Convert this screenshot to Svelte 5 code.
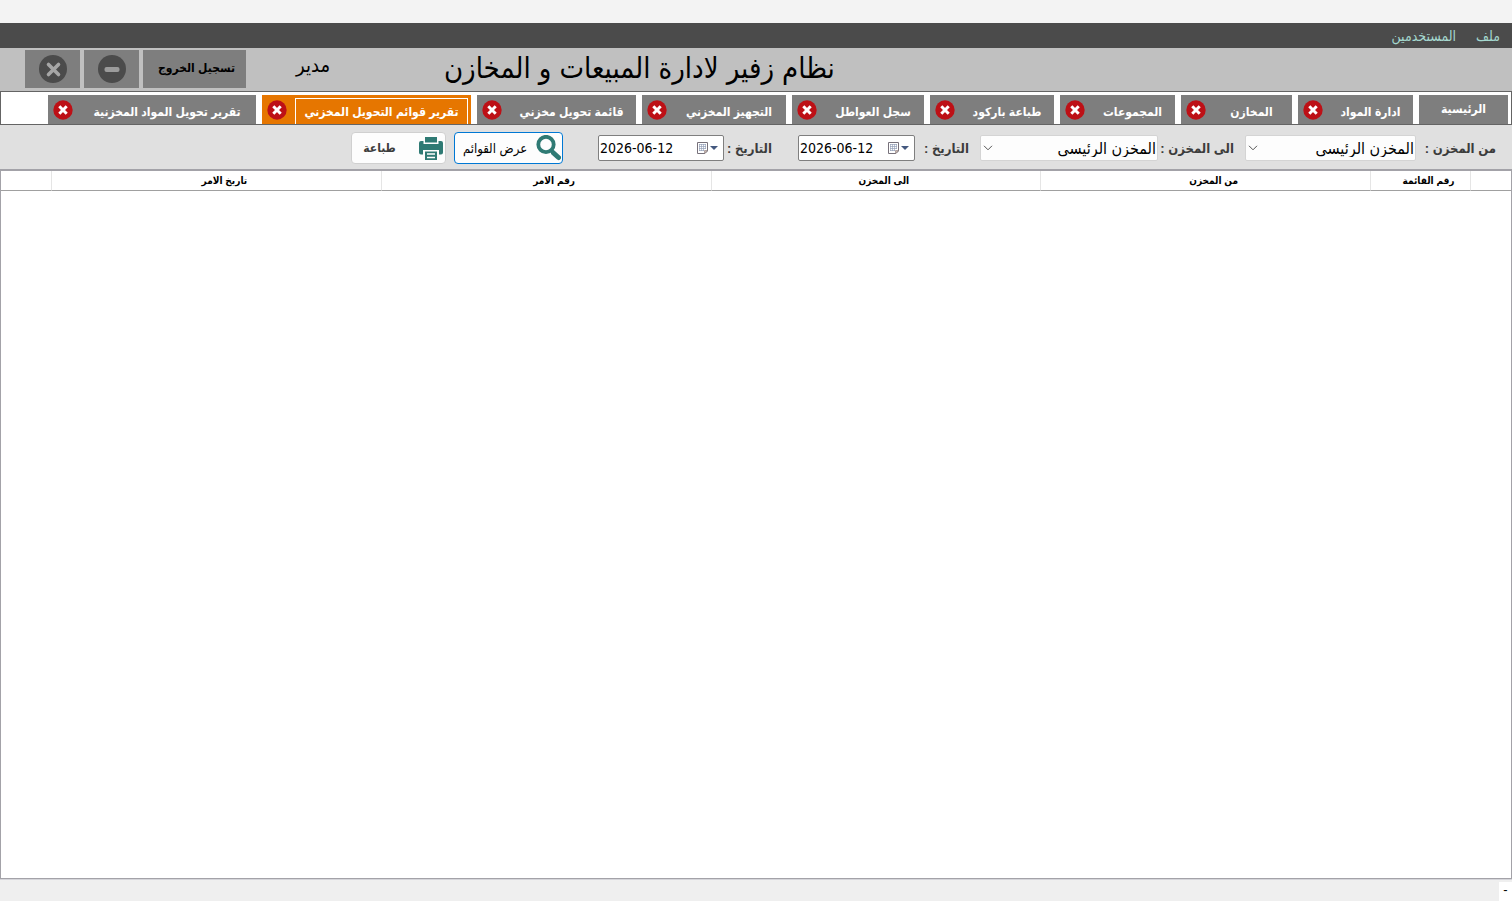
<script>
  const menus = ['ملف', 'المستخدمين'];
  const tabs = [
    { title: 'ادارة المواد', width: 115 },
    { title: 'المخازن', width: 111 },
    { title: 'المجموعات', width: 115 },
    { title: 'طباعة باركود', width: 124 },
    { title: 'سجل العواطل', width: 132 },
    { title: 'التجهيز المخزني', width: 144 },
    { title: 'قائمة تحويل مخزني', width: 159 },
    { title: 'تقرير قوائم التحويل المخزني', width: 209 },
    { title: 'تقرير تحويل المواد المخزنية', width: 208 }
  ];
  let active = $state('تقرير قوائم التحويل المخزني');
  let fromDate = $state('2026-06-12');
  let toDate = $state('2026-06-12');
</script>

{#snippet calendar()}
  <svg width="22" height="14" viewBox="0 0 22 14" aria-hidden="true">
    <path d="M1.500 1.500h10v8.500l-2.500 2.500h-7.500z" fill="#fff" stroke="#77717a" />
    <path d="M3 3h7v1H3zM3 5h7v1H3zM3 7h7v1H3zM3 9h5v1H3z" fill="#b4bdd0" />
    <path d="M3 3h1v7H3zM5 3h1v7H5zM7 3h1v7H7zM9 3h1v5H9z" fill="#8f9bb3" opacity=".6" />
    <path d="M8.500 12.500V9.500h3z" fill="#c9b6b0" stroke="#8d8080" stroke-width=".6" />
    <path d="M14 5h8l-4 4z" fill="#44597f" />
  </svg>
{/snippet}

{#snippet warehouse(id)}
  <div class="combo">
    <select {id}>
      <option>المخزن الرئيسي</option>
    </select>
    <svg width="10" height="6" viewBox="0 0 10 6" aria-hidden="true">
      <path d="M1 .8l4 4 4-4" fill="none" stroke="#555" />
    </svg>
  </div>
{/snippet}

<div class="app" dir="rtl">
  <nav class="menubar">
    {#each menus as menu}
      <button>{menu}</button>
    {/each}
  </nav>

  <header>
    <h1>نظام زفير لادارة المبيعات و المخازن</h1>
    <span class="user">مدير</span>
    <div class="window-actions">
      <button class="logout">تسجيل الخروج</button>
      <button class="round" aria-label="تصغير">
        <svg width="28" height="28" viewBox="0 0 28 28">
          <circle cx="14" cy="14" r="14" fill="#4b4b4b" />
          <rect x="6.500" y="12" width="15" height="5" rx="2" fill="#9b9b9b" />
        </svg>
      </button>
      <button class="round" aria-label="اغلاق">
        <svg width="28" height="28" viewBox="0 0 28 28">
          <circle cx="14" cy="14" r="14" fill="#4b4b4b" />
          <path d="M9.500 9.500l10 10M19.500 9.500l-10 10" stroke="#a6a6a6" stroke-width="3.600" stroke-linecap="round" />
        </svg>
      </button>
    </div>
  </header>

  <div class="tabs">
    <div class="tab home">
      <button class="title">الرئيسية</button>
    </div>
    {#each tabs as tab}
      <div class="tab" class:active={tab.title === active} style="width: {tab.width}px">
        <button class="title" onclick={() => (active = tab.title)}>{tab.title}</button>
        <button class="close" aria-label="اغلاق">
          <svg width="20" height="20" viewBox="0 0 20 20">
            <circle cx="10" cy="10" r="9.700" fill="#bd1016" />
            <path d="M6.300 6.300l7.400 7.400M13.700 6.300l-7.400 7.400" stroke="#fff" stroke-width="3" />
          </svg>
        </button>
      </div>
    {/each}
  </div>

  <form class="filters" onsubmit={(e) => e.preventDefault()}>
    <label class="first" for="from-store">من المخزن :</label>
    {@render warehouse('from-store')}
    <label class="second" for="to-store">الى المخزن :</label>
    {@render warehouse('to-store')}
    <label class="day" for="from-date">التاريخ :</label>
    <div class="date">
      <input id="from-date" type="text" bind:value={fromDate} />
      <button type="button" aria-label="التقويم">{@render calendar()}</button>
    </div>
    <label class="day near" for="to-date">التاريخ :</label>
    <div class="date wide">
      <input id="to-date" type="text" bind:value={toDate} />
      <button type="button" aria-label="التقويم">{@render calendar()}</button>
    </div>
    <button class="action show" type="submit">
      <svg width="26" height="26" viewBox="0 0 26 26" aria-hidden="true">
        <circle cx="11" cy="9.500" r="7.700" fill="none" stroke="#2f7a74" stroke-width="3.800" />
        <path d="M16 15l3 3" stroke="#2f7a74" stroke-width="3.600" />
        <path d="M18.500 18l5 4.500" stroke="#2f7a74" stroke-width="5" stroke-linecap="round" />
      </svg>
      <span>عرض القوائم</span>
    </button>
    <button class="action print" type="button">
      <svg width="24" height="24" viewBox="0 0 24 24" aria-hidden="true">
        <path d="M6 1h12v5.500H6z" fill="#2f7a74" />
        <path d="M2 5h2.500v3h15V5H22q2 0 2 2v9.500q0 2-2 2h-2V14H4v4.500H2q-2 0-2-2V7q0-2 2-2z" fill="#2f7a74" />
        <path d="M6 15.500h12V24H6z" fill="#2f7a74" />
        <path d="M8 18h8M8 21.500h8" stroke="#fff" stroke-width="1.300" />
      </svg>
      <span>طباعة</span>
    </button>
  </form>

  <main>
    <table>
      <colgroup>
        <col class="marker" />
        <col class="number" />
        <col />
        <col />
        <col />
        <col />
        <col class="last" />
      </colgroup>
      <thead>
        <tr>
          <th></th>
          <th>رقم القائمة</th>
          <th>من المخزن</th>
          <th>الى المخزن</th>
          <th>رقم الامر</th>
          <th>تاريخ الامر</th>
          <th></th>
        </tr>
      </thead>
    </table>
  </main>

  <footer><span>-</span></footer>
</div>

<style>
  :global(body) {
    margin: 0;
  }
  .app {
    display: flex;
    flex-direction: column;
    min-height: 100vh;
    box-sizing: border-box;
    padding-top: 23px;
    background: #f3f3f3;
    color: #000;
    font-family: 'Liberation Sans', 'DejaVu Sans Condensed', 'DejaVu Sans', sans-serif;
    font-size: 13px;
  }
  button,
  input,
  select {
    margin: 0;
    padding: 0;
    border: 0;
    background: none;
    color: inherit;
    font: inherit;
  }
  svg {
    display: block;
    flex: none;
  }
  .menubar {
    display: flex;
    gap: 20px;
    height: 25px;
    padding: 0 12px;
    background: #4b4b4b;
    color: #a5d8cf;
  }
  .menubar button {
    font-size: 14px;
  }
  header {
    display: flex;
    align-items: center;
    box-sizing: border-box;
    height: 43px;
    padding: 0 0 2px 25px;
    background: #c0c0c0;
  }
  h1 {
    margin: 0 0 2px auto;
    padding-right: calc(45% + 8px);
    font-size: 29px;
    font-weight: 400;
    line-height: 38px;
    white-space: nowrap;
  }
  .user {
    padding: 0 0 8px 50px;
    font-size: 20px;
  }
  .window-actions {
    display: flex;
    gap: 4px;
  }
  .window-actions button {
    display: grid;
    place-items: center;
    height: 38px;
    background: #7e7e7e;
  }
  .window-actions .logout {
    width: 103px;
    padding: 0 0 2px 4px;
    font-size: 12px;
    font-weight: 700;
  }
  .round {
    width: 55px;
  }
  .tabs {
    display: flex;
    gap: 6px;
    height: 29px;
    padding: 3px 3px 0;
    border: 1px solid #646464;
    background: #fff;
  }
  .tab {
    display: flex;
    align-items: center;
    background: #7e7e7e;
    color: #fff;
  }
  .tab .title {
    flex: 1;
    align-self: stretch;
    margin: 3px 3px 0 0;
    border: 1px solid transparent;
    border-bottom: 0;
    font-size: 12px;
    font-weight: 700;
    white-space: nowrap;
  }
  .home {
    width: 89px;
  }
  .home .title {
    margin: 0 0 3px;
  }
  .tab.active {
    background: #e67600;
  }
  .tab.active .title {
    border-color: #fff;
  }
  .close {
    box-sizing: border-box;
    width: 33px;
    padding: 0 8px 0 5px;
  }
  .filters {
    display: flex;
    align-items: center;
    box-sizing: border-box;
    height: 44px;
    padding: 2px 16px 0 0;
    background: #e0e0e0;
  }
  label {
    flex: none;
    color: #3c3c3c;
    font-size: 13px;
    font-weight: 700;
    white-space: nowrap;
  }
  .first {
    width: 80px;
  }
  .second {
    width: 76px;
  }
  .day {
    width: 54px;
  }
  .day.near {
    width: 48px;
  }
  .combo {
    position: relative;
    width: 178px;
    margin-left: 11px;
  }
  .first + .combo {
    width: 171px;
  }
  .combo select {
    appearance: none;
    width: 100%;
    height: 26px;
    padding-right: 1px;
    border: 1px solid #d4d4d4;
    border-radius: 2px;
    background: #fdfdfd;
    font-size: 16px;
  }
  .combo svg {
    position: absolute;
    left: 3px;
    top: 10px;
    pointer-events: none;
  }
  .date {
    display: flex;
    box-sizing: border-box;
    direction: ltr;
    width: 117px;
    height: 26px;
    margin-left: 26px;
    border: 1px solid #7f7f7f;
    border-radius: 2px;
    background: #fff;
  }
  .date input {
    flex: 1;
    min-width: 0;
    padding-left: 1px;
    font-family: 'DejaVu Sans Condensed', sans-serif;
    font-size: 14px;
  }
  .date button {
    padding-right: 5px;
  }
  .date.wide {
    width: 126px;
    margin-left: 35px;
  }
  .action {
    display: flex;
    align-items: center;
    box-sizing: border-box;
    height: 32px;
    border: 1px solid #d0d0d0;
    border-radius: 4px;
    background: #fdfdfd;
    white-space: nowrap;
  }
  .action span {
    flex: 1;
  }
  .show {
    width: 109px;
    margin-left: 8px;
    padding-right: 1px;
    border-color: #0078d4;
    font-size: 13px;
  }
  .print {
    width: 95px;
    padding-right: 2px;
    color: #3c3c3c;
    font-size: 12px;
    font-weight: 700;
  }
  .print span {
    padding-right: 12px;
  }
  main {
    flex: 1;
    border: 1px solid #a3a2a8;
    border-top-width: 2px;
    background: #fff;
  }
  table {
    width: 100%;
    border-collapse: separate;
    border-spacing: 0;
    table-layout: fixed;
  }
  .marker {
    width: 41px;
  }
  .number {
    width: 100px;
  }
  .last {
    width: 50px;
  }
  th {
    box-sizing: border-box;
    height: 20px;
    padding: 0 0 0 16px;
    border-bottom: 1px solid #a0a0a0;
    border-left: 1px solid #e5e5e5;
    font-size: 10px;
    font-weight: 700;
    line-height: 16px;
  }
  th:last-child {
    border-left: 0;
  }
  footer {
    display: flex;
    height: 21px;
    border-top: 1px solid #d5d5da;
    background: #efefef;
  }
  footer span {
    width: 13px;
    margin-top: 2px;
    background: #fff;
    line-height: 16px;
    text-align: center;
  }
</style>
